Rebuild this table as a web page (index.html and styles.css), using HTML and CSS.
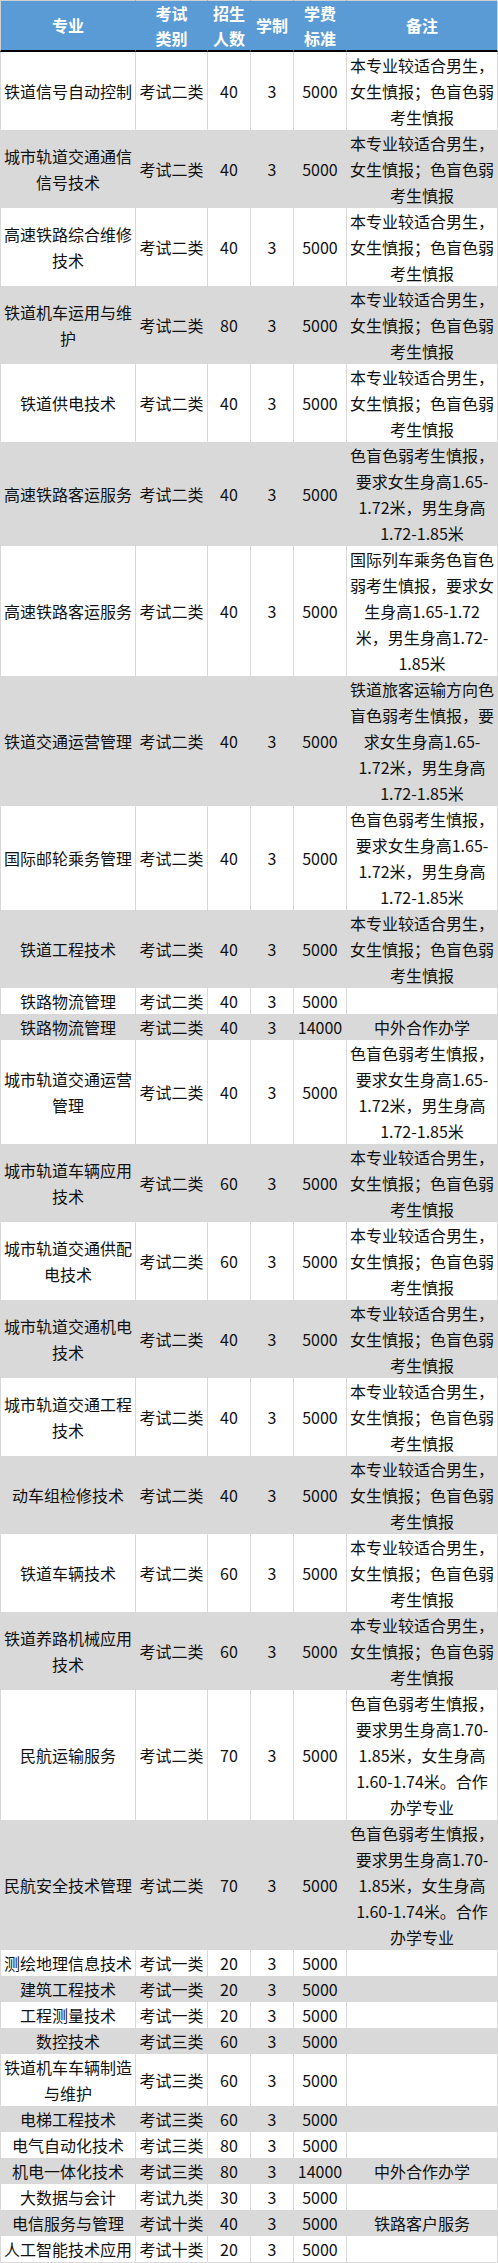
FILE: index.html
```html
<!DOCTYPE html>
<html lang="zh-CN">
<head>
<meta charset="utf-8">
<title>招生专业表</title>
<link rel="stylesheet" href="styles.css">
</head>
<body>
<table class="plan">
  <thead>
    <tr>
      <th class="c1">专业</th>
      <th class="c2">考试<br>类别</th>
      <th class="c3">招生<br>人数</th>
      <th class="c4">学制</th>
      <th class="c5">学费<br>标准</th>
      <th class="c6">备注</th>
    </tr>
  </thead>
  <tbody>
    <tr><td>铁道信号自动控制</td><td>考试二类</td><td>40</td><td>3</td><td>5000</td><td>本专业较适合男生，<br>女生慎报；色盲色弱<br>考生慎报</td></tr>
    <tr><td>城市轨道交通通信<br>信号技术</td><td>考试二类</td><td>40</td><td>3</td><td>5000</td><td>本专业较适合男生，<br>女生慎报；色盲色弱<br>考生慎报</td></tr>
    <tr><td>高速铁路综合维修<br>技术</td><td>考试二类</td><td>40</td><td>3</td><td>5000</td><td>本专业较适合男生，<br>女生慎报；色盲色弱<br>考生慎报</td></tr>
    <tr><td>铁道机车运用与维<br>护</td><td>考试二类</td><td>80</td><td>3</td><td>5000</td><td>本专业较适合男生，<br>女生慎报；色盲色弱<br>考生慎报</td></tr>
    <tr><td>铁道供电技术</td><td>考试二类</td><td>40</td><td>3</td><td>5000</td><td>本专业较适合男生，<br>女生慎报；色盲色弱<br>考生慎报</td></tr>
    <tr><td>高速铁路客运服务</td><td>考试二类</td><td>40</td><td>3</td><td>5000</td><td>色盲色弱考生慎报，<br>要求女生身高1.65-<br>1.72米，男生身高<br>1.72-1.85米</td></tr>
    <tr><td>高速铁路客运服务</td><td>考试二类</td><td>40</td><td>3</td><td>5000</td><td>国际列车乘务色盲色<br>弱考生慎报，要求女<br>生身高1.65-1.72<br>米，男生身高1.72-<br>1.85米</td></tr>
    <tr><td>铁道交通运营管理</td><td>考试二类</td><td>40</td><td>3</td><td>5000</td><td>铁道旅客运输方向色<br>盲色弱考生慎报，要<br>求女生身高1.65-<br>1.72米，男生身高<br>1.72-1.85米</td></tr>
    <tr><td>国际邮轮乘务管理</td><td>考试二类</td><td>40</td><td>3</td><td>5000</td><td>色盲色弱考生慎报，<br>要求女生身高1.65-<br>1.72米，男生身高<br>1.72-1.85米</td></tr>
    <tr><td>铁道工程技术</td><td>考试二类</td><td>40</td><td>3</td><td>5000</td><td>本专业较适合男生，<br>女生慎报；色盲色弱<br>考生慎报</td></tr>
    <tr><td>铁路物流管理</td><td>考试二类</td><td>40</td><td>3</td><td>5000</td><td></td></tr>
    <tr><td>铁路物流管理</td><td>考试二类</td><td>40</td><td>3</td><td>14000</td><td>中外合作办学</td></tr>
    <tr><td>城市轨道交通运营<br>管理</td><td>考试二类</td><td>40</td><td>3</td><td>5000</td><td>色盲色弱考生慎报，<br>要求女生身高1.65-<br>1.72米，男生身高<br>1.72-1.85米</td></tr>
    <tr><td>城市轨道车辆应用<br>技术</td><td>考试二类</td><td>60</td><td>3</td><td>5000</td><td>本专业较适合男生，<br>女生慎报；色盲色弱<br>考生慎报</td></tr>
    <tr><td>城市轨道交通供配<br>电技术</td><td>考试二类</td><td>60</td><td>3</td><td>5000</td><td>本专业较适合男生，<br>女生慎报；色盲色弱<br>考生慎报</td></tr>
    <tr><td>城市轨道交通机电<br>技术</td><td>考试二类</td><td>40</td><td>3</td><td>5000</td><td>本专业较适合男生，<br>女生慎报；色盲色弱<br>考生慎报</td></tr>
    <tr><td>城市轨道交通工程<br>技术</td><td>考试二类</td><td>40</td><td>3</td><td>5000</td><td>本专业较适合男生，<br>女生慎报；色盲色弱<br>考生慎报</td></tr>
    <tr><td>动车组检修技术</td><td>考试二类</td><td>40</td><td>3</td><td>5000</td><td>本专业较适合男生，<br>女生慎报；色盲色弱<br>考生慎报</td></tr>
    <tr><td>铁道车辆技术</td><td>考试二类</td><td>60</td><td>3</td><td>5000</td><td>本专业较适合男生，<br>女生慎报；色盲色弱<br>考生慎报</td></tr>
    <tr><td>铁道养路机械应用<br>技术</td><td>考试二类</td><td>60</td><td>3</td><td>5000</td><td>本专业较适合男生，<br>女生慎报；色盲色弱<br>考生慎报</td></tr>
    <tr><td>民航运输服务</td><td>考试二类</td><td>70</td><td>3</td><td>5000</td><td>色盲色弱考生慎报，<br>要求男生身高1.70-<br>1.85米，女生身高<br>1.60-1.74米。合作<br>办学专业</td></tr>
    <tr><td>民航安全技术管理</td><td>考试二类</td><td>70</td><td>3</td><td>5000</td><td>色盲色弱考生慎报，<br>要求男生身高1.70-<br>1.85米，女生身高<br>1.60-1.74米。合作<br>办学专业</td></tr>
    <tr><td>测绘地理信息技术</td><td>考试一类</td><td>20</td><td>3</td><td>5000</td><td></td></tr>
    <tr><td>建筑工程技术</td><td>考试一类</td><td>20</td><td>3</td><td>5000</td><td></td></tr>
    <tr><td>工程测量技术</td><td>考试一类</td><td>20</td><td>3</td><td>5000</td><td></td></tr>
    <tr><td>数控技术</td><td>考试三类</td><td>60</td><td>3</td><td>5000</td><td></td></tr>
    <tr><td>铁道机车车辆制造<br>与维护</td><td>考试三类</td><td>60</td><td>3</td><td>5000</td><td></td></tr>
    <tr><td>电梯工程技术</td><td>考试三类</td><td>60</td><td>3</td><td>5000</td><td></td></tr>
    <tr><td>电气自动化技术</td><td>考试三类</td><td>80</td><td>3</td><td>5000</td><td></td></tr>
    <tr><td>机电一体化技术</td><td>考试三类</td><td>80</td><td>3</td><td>14000</td><td>中外合作办学</td></tr>
    <tr><td>大数据与会计</td><td>考试九类</td><td>30</td><td>3</td><td>5000</td><td></td></tr>
    <tr><td>电信服务与管理</td><td>考试十类</td><td>40</td><td>3</td><td>5000</td><td>铁路客户服务</td></tr>
    <tr><td>人工智能技术应用</td><td>考试十类</td><td>20</td><td>3</td><td>5000</td><td></td></tr>
  </tbody>
</table>
</body>
</html>
```

FILE: styles.css
```css
html, body {
  margin: 0;
  padding: 0;
  background: #ffffff;
}

.plan {
  width: 498px;
  table-layout: fixed;
  border-collapse: separate;
  border-spacing: 0;
  font-family: "Noto Sans CJK SC", "Noto Sans", sans-serif;
  font-size: 16px;
  color: #111111;
}

.plan th,
.plan td {
  box-sizing: border-box;
  padding: 0;
  text-align: center;
  vertical-align: middle;
  white-space: nowrap;
  overflow: hidden;
}

.plan th {
  background: #5b9bd5;
  color: #ffffff;
  font-weight: bold;
  line-height: 24.5px;
  border-top: 1px solid #d0d0d0;
  border-bottom: 2px solid #000000;
  border-right: 1px solid #5b9bd5;
}

.plan th.c1 { width: 136px; border-left: 1px solid #d0d0d0; }
.plan th.c2 { width: 72px; }
.plan th.c3 { width: 43px; }
.plan th.c4 { width: 43px; }
.plan th.c5 { width: 53px; }
.plan th.c6 { width: 151px; border-right-color: #d0d0d0; }

.plan td {
  line-height: 26px;
  border-right: 1px solid #d9d9d9;
  background: #ffffff;
}

.plan td:first-child {
  border-left: 1px solid #d9d9d9;
}

.plan tbody tr:nth-child(even) td {
  background: #d9d9d9;
}

.plan tbody tr:last-child td {
  border-bottom: 1px solid #d9d9d9;
}
```
